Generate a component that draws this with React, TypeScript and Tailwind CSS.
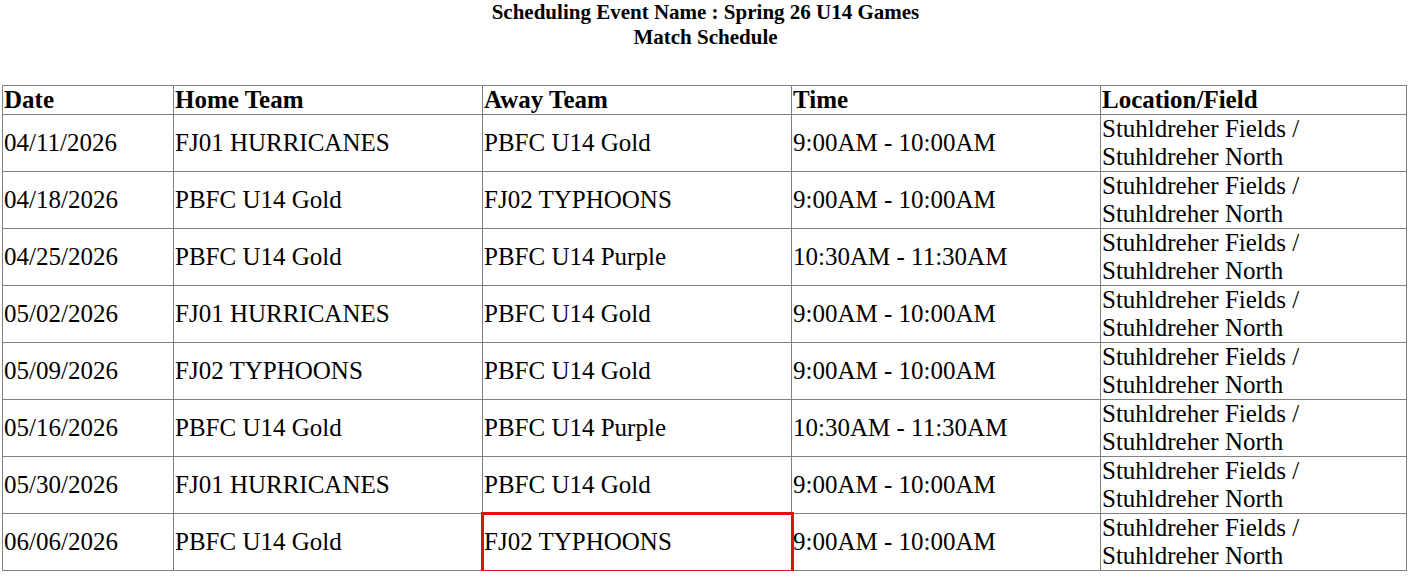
const rows = [
  ['04/11/2026', 'FJ01 HURRICANES', 'PBFC U14 Gold', '9:00AM - 10:00AM'],
  ['04/18/2026', 'PBFC U14 Gold', 'FJ02 TYPHOONS', '9:00AM - 10:00AM'],
  ['04/25/2026', 'PBFC U14 Gold', 'PBFC U14 Purple', '10:30AM - 11:30AM'],
  ['05/02/2026', 'FJ01 HURRICANES', 'PBFC U14 Gold', '9:00AM - 10:00AM'],
  ['05/09/2026', 'FJ02 TYPHOONS', 'PBFC U14 Gold', '9:00AM - 10:00AM'],
  ['05/16/2026', 'PBFC U14 Gold', 'PBFC U14 Purple', '10:30AM - 11:30AM'],
  ['05/30/2026', 'FJ01 HURRICANES', 'PBFC U14 Gold', '9:00AM - 10:00AM'],
  ['06/06/2026', 'PBFC U14 Gold', 'FJ02 TYPHOONS', '9:00AM - 10:00AM'],
];

const cell = 'border border-[#808080] px-px py-0 text-left align-middle';

export default function App() {
  return (
    <div className="bg-white text-black" style={{ fontFamily: '"Liberation Serif", "Times New Roman", serif' }}>
      <div className="text-center text-[21px] font-bold leading-[25px]">
        <div>Scheduling Event Name : Spring 26 U14 Games</div>
        <div>Match Schedule</div>
      </div>
      <table className="ml-[2px] mt-[35px] w-[1405px] table-fixed border-collapse text-[25px] leading-[28px]">
        <thead>
          <tr>
            <th className={`${cell} w-[171px] font-bold`}>Date</th>
            <th className={`${cell} w-[309px] font-bold`}>Home Team</th>
            <th className={`${cell} w-[309px] font-bold`}>Away Team</th>
            <th className={`${cell} w-[309px] font-bold`}>Time</th>
            <th className={`${cell} font-bold`}>Location/Field</th>
          </tr>
        </thead>
        <tbody>
          {rows.map((r, i) => (
            <tr key={r[0]}>
              <td className={cell}>{r[0]}</td>
              <td className={cell}>{r[1]}</td>
              <td
                className={
                  i === rows.length - 1
                    ? `${cell} outline-[3px] outline-solid outline-[#e01010] -outline-offset-1`
                    : cell
                }
              >
                {r[2]}
              </td>
              <td className={cell}>{r[3]}</td>
              <td className={cell}>
                Stuhldreher Fields /<br />
                Stuhldreher North
              </td>
            </tr>
          ))}
        </tbody>
      </table>
    </div>
  );
}
